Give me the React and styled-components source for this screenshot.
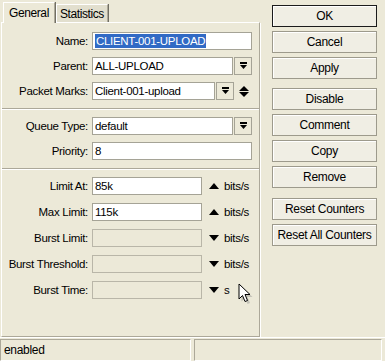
import React from 'react';
import styled, { createGlobalStyle } from 'styled-components';

const GlobalStyle = createGlobalStyle`
  body {
    margin: 0;
    background: #ece9d8;
    font-family: "Liberation Sans", Arial, sans-serif;
    font-size: 11.5px;
    letter-spacing: -0.3px;
    color: #000;
  }
`;

const Window = styled.div`
  width: 385px;
  height: 361px;
  display: flex;
  flex-direction: column;
  background: #ece9d8;
  overflow: hidden;
  position: relative;
`;

const Main = styled.div`
  flex: 1;
  display: flex;
`;

const TabArea = styled.div`
  width: 262px;
  display: flex;
  flex-direction: column;
`;

const TabRow = styled.div`
  height: 22px;
  display: flex;
  align-items: flex-end;
  padding-left: 3px;
`;

const Tab = styled.div`
  height: ${({ active }) => (active ? '20px' : '17px')};
  padding: 0 ${({ active }) => (active ? '5px' : '3px')};
  display: flex;
  align-items: center;
  background: ${({ active }) => (active ? '#ece9d8' : '#e2dfce')};
  border-top: 1px solid #fff;
  border-left: 1px solid #fff;
  border-right: 1px solid #aca899;
  box-shadow: 1px 0 0 #716f64;
  margin-right: 1px;
  position: relative;
  z-index: ${({ active }) => (active ? 1 : 0)};
  margin-bottom: ${({ active }) => (active ? '-1px' : '0')};
  font-size: 12px;
  letter-spacing: -0.4px;
`;

const Panel = styled.div`
  flex: 1;
  margin: 0 2px 0 1px;
  border-top: 1px solid #fff;
  border-left: 1px solid #fff;
  border-right: 1px solid #aca899;
  border-bottom: 1px solid #aca899;
  box-shadow: 1px 1px 0 #fff;
  padding-top: 9px;
  display: flex;
  flex-direction: column;
`;

const Group = styled.div`
  display: flex;
  flex-direction: column;
  gap: ${({ gap }) => gap}px;
`;

const Separator = styled.div`
  height: 0;
  border-top: 1px solid #aca899;
  border-bottom: 1px solid #fff;
  margin: 8px 0 7px;
`;

const Row = styled.div`
  display: flex;
  align-items: center;
  height: 18px;
`;

const Label = styled.div`
  width: 86px;
  margin-right: 4px;
  text-align: right;
  white-space: nowrap;
`;

const Input = styled.div`
  width: ${({ w }) => w}px;
  height: 18px;
  box-sizing: border-box;
  border: 1px solid ${({ disabled }) => (disabled ? '#b9b6a8' : '#a5a396')};
  background: ${({ disabled }) => (disabled ? '#ece9d8' : '#fff')};
  display: flex;
  align-items: center;
  padding-left: 2px;
  white-space: nowrap;
  overflow: hidden;
`;

const Selected = styled.span`
  background: #316ac5;
  color: #fff;
  line-height: 14px;
  padding: 0 1px;
`;

const DropButton = styled.div`
  width: 18px;
  height: 18px;
  box-sizing: border-box;
  margin-left: 1px;
  border: 1px solid #a5a396;
  background: #ece9d8;
  display: flex;
  align-items: center;
  justify-content: center;
`;

const IconSlot = styled.div`
  width: ${({ w }) => w}px;
  margin-left: ${({ ml }) => ml}px;
  display: flex;
  align-items: center;
  justify-content: center;
`;

const Unit = styled.div`
  margin-left: 5px;
`;

const ButtonColumn = styled.div`
  width: 123px;
  padding: 5px 0 0 10px;
  box-sizing: border-box;
  display: flex;
  flex-direction: column;
  gap: 4px;
`;

const Button = styled.div`
  width: 105px;
  height: 22px;
  box-sizing: border-box;
  border: 1px solid ${({ primary }) => (primary ? '#1b1b1b' : '#9d9a8c')};
  background: #f0eee4;
  box-shadow: inset 1px 1px 0 #fff;
  display: flex;
  align-items: center;
  justify-content: center;
  font-size: 12px;
  margin-top: ${({ gapBefore }) => gapBefore || 0}px;
`;

const StatusBar = styled.div`
  height: 24px;
  box-sizing: border-box;
  border-top: 1px solid #fff;
  display: flex;
  padding: 1px 0 0 0;
`;

const StatusCell = styled.div`
  width: ${({ w }) => (w ? `${w}px` : 'auto')};
  flex: ${({ w }) => (w ? 'none' : '1')};
  margin-right: 3px;
  border-top: 1px solid #aca899;
  border-left: 1px solid #aca899;
  border-bottom: 1px solid #fff;
  border-right: 1px solid #fff;
  display: flex;
  align-items: center;
  padding-left: 3px;
  font-size: 12px;
`;

const Cursor = styled.svg`
  position: absolute;
  left: 238px;
  top: 283px;
`;

const DropIcon = () => (
  <svg width="9" height="8" viewBox="0 0 9 8">
    <rect x="1" y="0" width="7" height="2" fill="#000" />
    <path d="M1 3 H8 L4.5 7 Z" fill="#000" />
  </svg>
);

const SpinIcon = () => (
  <svg width="10" height="11" viewBox="0 0 10 11">
    <path d="M5 0 L10 5 H0 Z" fill="#000" />
    <path d="M0 6 H10 L5 11 Z" fill="#000" />
  </svg>
);

const Arrow = ({ up }) => (
  <svg width="10" height="6" viewBox="0 0 10 6">
    <path d={up ? 'M5 0 L10 6 H0 Z' : 'M0 0 H10 L5 6 Z'} fill="#000" />
  </svg>
);

const Field = ({ label, children }) => (
  <Row>
    <Label>{label}</Label>
    {children}
  </Row>
);

const RateField = ({ label, value, up, unit, disabled }) => (
  <Field label={label}>
    <Input w={110} disabled={disabled}>{value}</Input>
    <IconSlot w={10} ml={7}>
      <Arrow up={up} />
    </IconSlot>
    <Unit>{unit}</Unit>
  </Field>
);

export default function App() {
  return (
    <Window>
      <GlobalStyle />
      <Main>
        <TabArea>
          <TabRow>
            <Tab active>General</Tab>
            <Tab>Statistics</Tab>
          </TabRow>
          <Panel>
            <Group gap={7}>
              <Field label="Name:">
                <Input w={160}>
                  <Selected>CLIENT-001-UPLOAD</Selected>
                </Input>
              </Field>
              <Field label="Parent:">
                <Input w={141}>ALL-UPLOAD</Input>
                <DropButton>
                  <DropIcon />
                </DropButton>
              </Field>
              <Field label="Packet Marks:">
                <Input w={123}>Client-001-upload</Input>
                <DropButton>
                  <DropIcon />
                </DropButton>
                <IconSlot w={10} ml={5}>
                  <SpinIcon />
                </IconSlot>
              </Field>
            </Group>
            <Separator />
            <Group gap={7}>
              <Field label="Queue Type:">
                <Input w={141}>default</Input>
                <DropButton>
                  <DropIcon />
                </DropButton>
              </Field>
              <Field label="Priority:">
                <Input w={160}>8</Input>
              </Field>
            </Group>
            <Separator />
            <Group gap={8}>
              <RateField label="Limit At:" value="85k" up unit="bits/s" />
              <RateField label="Max Limit:" value="115k" up unit="bits/s" />
              <RateField label="Burst Limit:" disabled unit="bits/s" />
              <RateField label="Burst Threshold:" disabled unit="bits/s" />
              <RateField label="Burst Time:" disabled unit="s" />
            </Group>
          </Panel>
        </TabArea>
        <ButtonColumn>
          <Button primary>OK</Button>
          <Button>Cancel</Button>
          <Button>Apply</Button>
          <Button gapBefore={5}>Disable</Button>
          <Button>Comment</Button>
          <Button>Copy</Button>
          <Button>Remove</Button>
          <Button gapBefore={6}>Reset Counters</Button>
          <Button>Reset All Counters</Button>
        </ButtonColumn>
      </Main>
      <StatusBar>
        <StatusCell w={186}>enabled</StatusCell>
        <StatusCell />
      </StatusBar>
      <Cursor width="16" height="22" viewBox="0 0 16 22">
        <path d="M2 2 L2 17 L5.5 13.5 L8 19.5 L10.5 18.5 L8 12.5 L13 12.5 Z" fill="#8a8a8a" opacity="0.4" transform="translate(1.5 1.5)" />
        <path d="M1 1 L1 16 L4.5 12.5 L7 18.5 L9.5 17.5 L7 11.5 L12 11.5 Z" fill="#fff" stroke="#000" strokeWidth="1" strokeLinejoin="round" />
      </Cursor>
    </Window>
  );
}
